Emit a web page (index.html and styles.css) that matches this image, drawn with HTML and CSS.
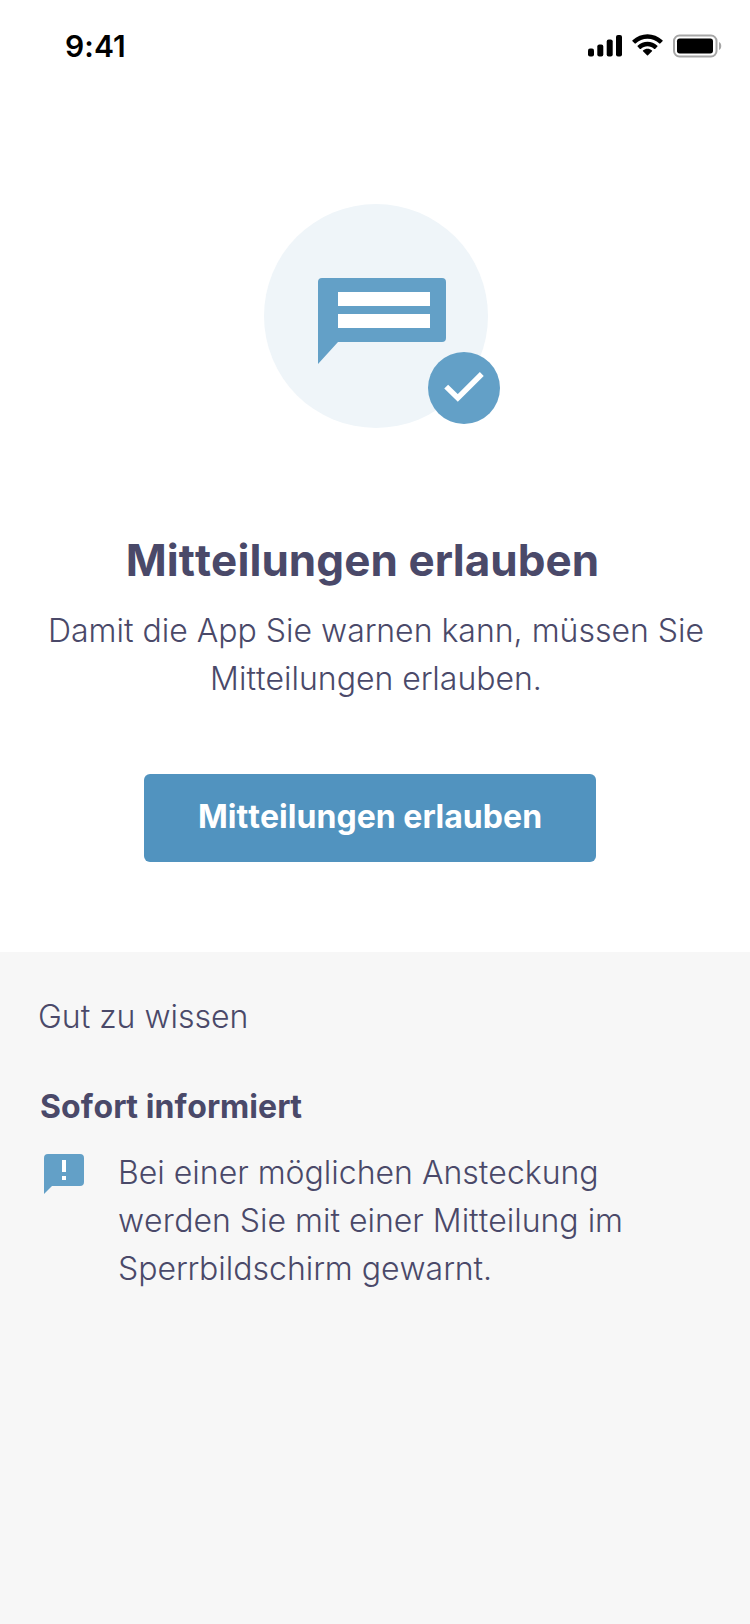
FILE: index.html
```html
<!DOCTYPE html>
<html lang="de">
<head>
<meta charset="utf-8">
<title>Mitteilungen erlauben</title>
<link rel="stylesheet" href="styles.css">
</head>
<body>
<header class="status">
  <span class="time">9:41</span>
  <svg class="indicators" width="136" height="24" viewBox="0 0 136 24">
    <rect x="0" y="14.500" width="6" height="8" rx="2"/>
    <rect x="9.300" y="10.500" width="6" height="12" rx="2"/>
    <rect x="18.700" y="5.500" width="6" height="17" rx="2"/>
    <rect x="28" y="1" width="6" height="21.500" rx="2"/>
    <path d="M59.500 4.800c4.500 0 8.700 1.700 11.900 4.700.2.200.6.200.8 0l2.300-2.300c.3-.3.300-.6 0-.9-8.400-8-21.600-8-30 0-.3.300-.3.600 0 .9l2.300 2.300c.2.200.6.200.8 0C50.800 6.500 55 4.800 59.500 4.800zM59.500 12.300c2.500 0 4.900.9 6.700 2.600.3.200.6.200.9 0l2.300-2.300c.3-.3.300-.7 0-.9-5.600-5.200-14.200-5.200-19.800 0-.3.200-.3.600 0 .9l2.300 2.300c.3.200.6.200.9 0C54.600 13.200 57 12.300 59.500 12.300zM64 17.300c.3-.3.300-.7 0-.9-2.600-2.200-6.400-2.200-9 0-.3.200-.3.600 0 .9l4 4c.3.300.7.300 1 0z"/>
    <rect class="shell" x="86" y="1.500" width="42.500" height="21" rx="5.500"/>
    <rect x="89" y="4.500" width="36" height="15" rx="2.700"/>
    <path class="cap" d="M131 8v8c3-1.300 3-6.700 0-8z"/>
  </svg>
</header>
<main class="hero">
  <svg class="art" width="240" height="226" viewBox="0 0 240 226">
    <circle class="halo" cx="112" cy="112" r="112"/>
    <path class="blue" d="M58 74h120q4 0 4 4v56q0 4-4 4H74l-20 22V78q0-4 4-4z"/>
    <path class="white" d="M74 88h92v14H74zM74 110h92v14H74z"/>
    <circle class="blue" cx="200" cy="184" r="36"/>
    <path class="check" d="M182.200 182.600l11.600 11.400 24-24"/>
  </svg>
  <h1 class="title">Mitteilungen erlauben</h1>
  <p class="lead">Damit die App Sie warnen kann, müssen Sie<br>Mitteilungen erlauben.</p>
  <button class="button">Mitteilungen erlauben</button>
</main>
<section class="info">
  <p class="label">Gut zu wissen</p>
  <h2 class="subtitle">Sofort informiert</h2>
  <div class="row">
    <svg class="note" width="40" height="40" viewBox="0 0 40 40">
      <path class="blue" d="M4 0h32q4 0 4 4v24q0 4-4 4H8l-8 8V4q0-4 4-4z"/>
      <path class="white" d="M18 6h4v12h-4zM18 22h4v4h-4z"/>
    </svg>
    <p class="text">Bei einer möglichen Ansteckung<br>werden Sie mit einer Mitteilung im<br>Sperrbildschirm gewarnt.</p>
  </div>
</section>
</body>
</html>
```
FILE: styles.css
```css
* { box-sizing: border-box; }
body { margin: 0; width: 750px; height: 1624px; display: flex; flex-direction: column; background: #fff; color: #4a4969; font-family: Inter, "Liberation Sans", sans-serif; font-kerning: none; font-size: 32px; font-weight: 265; line-height: 48px; letter-spacing: 0; overflow: hidden; }
h1, h2, p { margin: 0; white-space: nowrap; }
.status { height: 88px; padding: 33px 26px 0 65px; display: flex; justify-content: space-between; align-items: flex-start; color: #000; }
.indicators { margin-top: 1px; }
.time { font-size: 30px; line-height: 26px; font-weight: 600; font-kerning: normal; letter-spacing: .1px; }
.shell { fill: none; stroke: #a6a6a6; stroke-width: 2; }
.cap { fill: #a6a6a6; }
.hero { height: 864px; padding-top: 116px; display: flex; flex-direction: column; align-items: center; }
.art { margin-left: 18px; flex: none; }
.blue { fill: #63a0c7; }
.white { fill: #fff; }
.halo { fill: #eff5f9; }
.check { fill: none; stroke: #fff; stroke-width: 5.500; }
.title { margin: 100px 25px 0 0; font-size: 44px; line-height: 60px; font-weight: 700; letter-spacing: .07px; }
.lead { margin: 17px 0 0 2px; text-align: center; }
.button { margin: 71px 10px 0 0; width: 452px; height: 88px; padding: 0 0 2px; border: 0; border-radius: 6px; background: #5193bf; color: #fff; font: 700 32px/48px Inter, "Liberation Sans", sans-serif; font-kerning: none; letter-spacing: .04px; }
.info { flex: 1; padding: 41px 38px; background: #f7f7f7; }
.subtitle { margin: 42px 0 0 2px; font-size: 32px; line-height: 48px; font-weight: 700; letter-spacing: .07px; }
.row { display: flex; gap: 34px; margin: 18px 0 0 6px; }
.note { margin-top: 5px; flex: none; }
```
